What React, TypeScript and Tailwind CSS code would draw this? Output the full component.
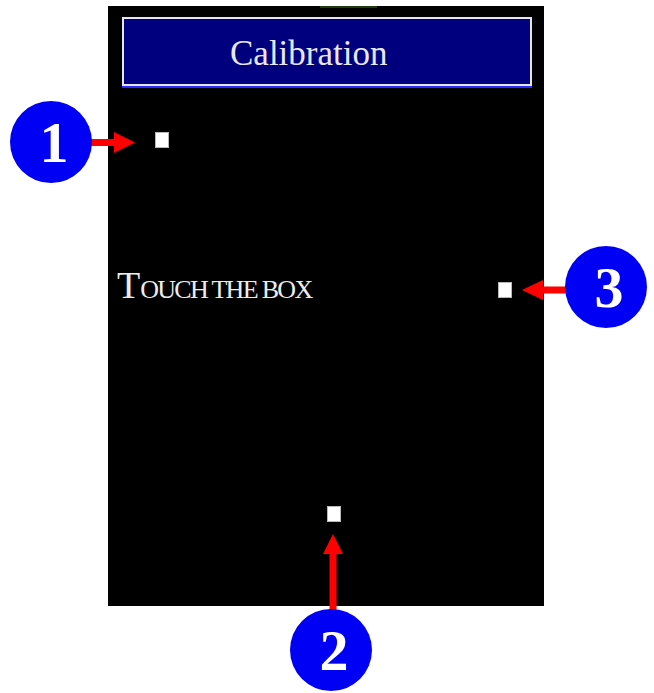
import React from "react";

const serif = { fontFamily: '"Liberation Serif", "Times New Roman", serif' } as const;

function Badge({ n, className }: { n: string; className: string }) {
  return (
    <div
      className={`absolute flex h-[82px] w-[82px] items-center justify-center rounded-full bg-[#0000f5] text-[58px] font-bold leading-none text-white ${className}`}
      style={serif}
    >
      <span className="translate-x-[3px] translate-y-[1px]">{n}</span>
    </div>
  );
}

function Target({ className }: { className: string }) {
  return <div className={`absolute h-[16px] w-[14px] border border-[#b8b8b8] bg-white ${className}`} />;
}

export default function App() {
  return (
    <div className="relative h-[693px] w-[654px] overflow-hidden bg-white">
      <div className="pl-[108px] pt-[6px]">
        <div className="relative h-[600px] w-[436px] bg-black">
          <div className="absolute left-[212px] top-0 h-[2px] w-[57px] bg-[#1c3a0c]" />
          <div className="ml-[14px] pt-[11px]">
            <div className="w-[410px] border-b-2 border-[#2a2aff]">
              <div
                className="flex h-[69px] items-center border-2 border-[#e4e4f4] bg-[#00007f] pl-[106px] pt-[3px] text-[35px] leading-none text-[#e8e8f0]"
                style={serif}
              >
                Calibration
              </div>
            </div>
          </div>
          <div className="ml-[9px] mt-[178px] flex items-baseline leading-none text-[#ececec]" style={serif}>
            <span className="text-[38px]">T</span>
            <span className="text-[26px] tracking-[-1.7px]">OUCH THE BOX</span>
          </div>
          <Target className="left-[47px] top-[126px]" />
          <Target className="left-[390px] top-[276px]" />
          <Target className="left-[219px] top-[500px]" />
        </div>
      </div>

      <svg className="absolute left-0 top-0" width="654" height="693" viewBox="0 0 654 693">
        <rect x="88" y="139" width="30" height="7" fill="#ff0000" />
        <polygon points="114,132 135,142.5 114,153" fill="#ff0000" />
        <rect x="539" y="286.5" width="30" height="7" fill="#ff0000" />
        <polygon points="543,280 522,290 543,300" fill="#ff0000" />
        <rect x="329.5" y="550" width="7" height="86" fill="#ff0000" />
        <polygon points="323,554 333,534 343,554" fill="#ff0000" />
      </svg>

      <Badge n="1" className="left-[10px] top-[101px]" />
      <Badge n="3" className="left-[565px] top-[246px]" />
      <Badge n="2" className="left-[290px] top-[609px]" />
    </div>
  );
}
